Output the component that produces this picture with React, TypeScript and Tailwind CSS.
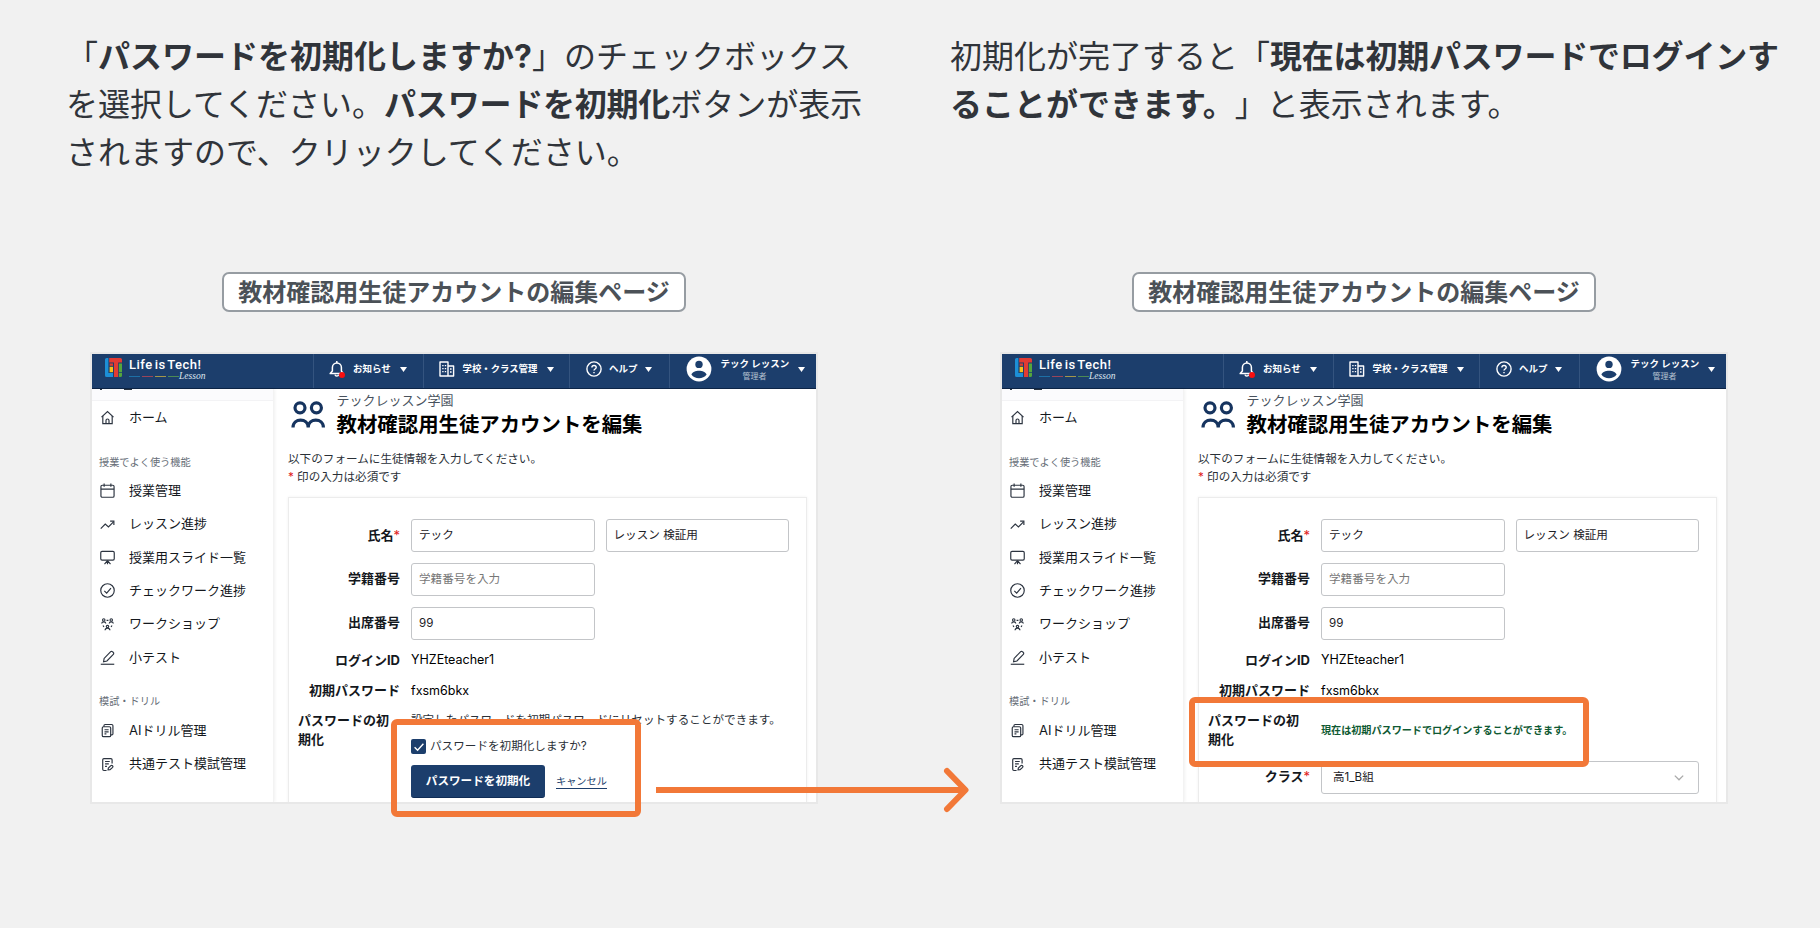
import React from 'react';

interface PageProps {
  done?: boolean;
}

const NAV_MAIN = [
  { label: '授業管理', icon: 'calendar' },
  { label: 'レッスン進捗', icon: 'trend' },
  { label: '授業用スライド一覧', icon: 'board' },
  { label: 'チェックワーク進捗', icon: 'check' },
  { label: 'ワークショップ', icon: 'group' },
  { label: '小テスト', icon: 'pen' },
];

const NAV_DRILL = [
  { label: 'AIドリル管理', icon: 'drill' },
  { label: '共通テスト模試管理', icon: 'exam' },
];

// 16x16 line icons used in the sidebar
const ICONS: Record<string, React.ReactNode> = {
  home: (
    <>
      <path d="M1.6 7.6 8 1.6l6.4 6" />
      <path d="M3 6.4v8.2h10V6.4" />
      <path d="M6.4 14.4v-3.2a1.6 1.6 0 0 1 3.2 0v3.2" />
    </>
  ),
  calendar: (
    <>
      <rect x="1" y="2.4" width="14" height="12.8" rx="1.4" />
      <path d="M1 6.6h14M4.4.6V4M11.6.6V4" />
    </>
  ),
  trend: (
    <>
      <path d="m.8 12.4 4.8-4.8 3.4 3 5.4-5.4" />
      <path d="M10.8 4.4h4v4" />
    </>
  ),
  board: (
    <>
      <rect x=".8" y="1.4" width="14.4" height="9.4" rx="1.4" />
      <path d="M8 10.8v4.4M8 11.4 4.8 15M8 11.4l3.2 3.6" />
    </>
  ),
  check: (
    <>
      <circle cx="8" cy="8" r="7.2" />
      <path d="m4.6 8.4 2.5 2.4 4.6-5.4" />
    </>
  ),
  group: (
    <>
      <circle cx="4" cy="3.2" r="1.3" />
      <circle cx="12" cy="3.2" r="1.3" />
      <circle cx="8" cy="10.2" r="1.3" />
      <path d="M1.8 7c.2-2.4 4.2-2.4 4.4 0M9.8 7c.2-2.4 4.2-2.4 4.4 0M5.4 14.2c.3-3 4.9-3 5.2 0" />
      <path d="M7 3.6h2M3.2 9l1 1.6M12.8 9l-1 1.6" />
    </>
  ),
  pen: (
    <>
      <path d="M.8 15.2h14.4" />
      <path d="m3.8 12.6.6-3.6 7-7.2a1.3 1.3 0 0 1 1.9 0l.9.9a1.3 1.3 0 0 1 0 1.9l-6.8 7.1Z" />
    </>
  ),
  drill: (
    <>
      <rect x="2.4" y="4" width="9" height="10.6" rx="1.4" />
      <path d="M4.2 4V2.9c0-.8.5-1.3 1.3-1.3h6.9c.9 0 1.4.5 1.4 1.3v8.6c0 .7-.5 1.2-1.2 1.2h-1.2" />
      <path d="M4.8 7.2h4.4M4.8 9.4h4.4M4.8 11.6h2" />
    </>
  ),
  exam: (
    <>
      <path d="M7 14.4H4.2c-.8 0-1.3-.5-1.3-1.3V3c0-.8.5-1.3 1.3-1.3h7.4c.8 0 1.3.5 1.3 1.3v4" />
      <path d="M5.4 4.8h5M5.4 7.4h4M5.4 10h2" />
      <path d="m8.6 13.8.3-2 2.7-2.6c1-1 3 .7 1.9 1.9l-2.8 2.5Z" />
    </>
  ),
};

function NavIcon({ name }: { name: string }) {
  return (
    <svg viewBox="0 0 16 16" className="h-[15px] w-[15px] shrink-0 fill-none stroke-[#2c3440] stroke-[1.25]">
      {ICONS[name]}
    </svg>
  );
}

function NavItem({ label, icon }: { label: string; icon: string }) {
  return (
    <div className="flex h-[33.4px] items-center gap-3.5 pl-2 text-[13px] text-[#14181d]">
      <NavIcon name={icon} />
      <span>{label}</span>
    </div>
  );
}

function Caret() {
  return (
    <svg viewBox="0 0 7 5" className="h-[5px] w-[7px] shrink-0 fill-white">
      <path d="M0 0h7L3.5 5Z" />
    </svg>
  );
}

function Logo() {
  return (
    <div className="flex w-[221px] shrink-0 items-start self-start pl-[13px] pt-1">
      <svg viewBox="0 0 17 19" className="h-[19px] w-[17px] shrink-0">
        <path d="M0 1.6Q0 0 1.6 0h1.8v15H8v4H1.6Q0 19 0 17.4Z" fill="#1d8fd6" />
        <path d="M4.2 0h11.2Q17 0 17 1.6v3h-3.8V19H9V4.6H4.2Z" fill="#e23b33" />
        <path d="M4.6 5.4H8v2.4H4.6Z" fill="#e23b33" />
        <path d="M4.6 8.8H8v5.4H4.6Z" fill="#f4bf18" />
        <path d="M13.9 5.4H17v8.8h-3.1ZM13.9 15H17v2.4q0 1.6-1.6 1.6h-1.5Z" fill="#55a63c" />
      </svg>
      <div className="relative ml-[7px] h-[22px]">
        <div className="whitespace-nowrap font-[Roboto,sans-serif] text-[13px] font-medium leading-[14px] tracking-[0.5px] text-white [word-spacing:-1.8px]">
          Life is Tech!
        </div>
        <div className="mt-[3.5px] flex gap-[2px]">
          <i className="h-[1.5px] w-[11px] bg-[#1d6fa6]" />
          <i className="h-[1.5px] w-[11px] bg-[#9a4459]" />
          <i className="h-[1.5px] w-[11px] bg-[#a4964a]" />
          <i className="h-[1.5px] w-[11px] bg-[#4b8a55]" />
        </div>
        <span className="absolute left-[50px] top-[13px] font-['Liberation_Serif',serif] text-[9.5px] font-normal italic leading-[11px] text-[#dfe6ef]">
          Lesson
        </span>
      </div>
    </div>
  );
}

const CELL = 'flex h-full shrink-0 items-center border-l border-[#34547f] pb-1';

function TopBar() {
  return (
    <header className="flex h-[35px] items-center border-b border-[#0d2547] bg-[#1c3e6c] text-[9.5px] font-bold text-white">
      <Logo />
      <div className={`${CELL} w-[110px] pl-[15px]`}>
        <svg viewBox="0 0 16 18" className="h-[18px] w-4 fill-none stroke-white stroke-[1.5]">
          <path d="M1.2 13.6h13L12.4 11V7.4a4.4 4.4 0 0 0-9 0V11Z" strokeLinejoin="round" />
          <path d="M7.8 1v2M6 14.6c.4 2 3.2 2 3.6 0" />
          <circle cx="13" cy="15" r="3" className="fill-[#fa0f0f] stroke-none" />
        </svg>
        <span className="ml-2 w-[47px]">お知らせ</span>
        <Caret />
      </div>
      <div className={`${CELL} w-[146px] pl-[15px]`}>
        <svg viewBox="0 0 16 16" className="h-4 w-4 fill-none stroke-white stroke-[1.4]">
          <path d="M1 15V1h8v14ZM9 5h5.6v10H9" strokeLinejoin="round" />
          <path d="M3.2 4.6h1.4M5.8 4.6h1.4M3.2 7.6h1.4M5.8 7.6h1.4M3.2 10.6h1.4M5.8 10.6h1.4M11 8h1.6M11 11h1.6" />
        </svg>
        <span className="ml-[7.5px] w-[84px] text-[9.4px]">学校・クラス管理</span>
        <Caret />
      </div>
      <div className={`${CELL} w-[100px] pl-[15.5px]`}>
        <svg viewBox="0 0 16 16" className="h-4 w-4 fill-none stroke-white stroke-[1.4]">
          <circle cx="8" cy="8" r="7.1" />
          <path d="M5.9 6.5c0-2.8 4.3-2.7 4.3-.1 0 1.6-2.2 1.6-2.2 3.2M8 11v1.3" />
        </svg>
        <span className="ml-[7.5px] w-9">ヘルプ</span>
        <Caret />
      </div>
      <div className={`${CELL} w-[147px] pl-[15.5px]`}>
        <svg viewBox="0 0 26 26" className="h-[26px] w-[26px]">
          <circle cx="13" cy="13" r="12.4" fill="#fff" />
          <circle cx="13" cy="8.4" r="3.7" fill="#1c3e6c" />
          <path d="M5.4 18.6c1.6-5.2 13.6-5.2 15.2 0-3.4 5-11.8 5-15.2 0Z" fill="#1c3e6c" />
        </svg>
        <div className="ml-[9px] mr-[9px] mt-px w-[68px] whitespace-nowrap text-center leading-[12px]">
          <div>テック レッスン</div>
          <div className="text-[8px] font-normal text-[#b5c1d0]">管理者</div>
        </div>
        <Caret />
      </div>
    </header>
  );
}

function Sidebar() {
  return (
    <nav className="w-[182px] shrink-0 border-r border-[#f3f3f3] shadow-[1px_0_3px_rgba(0,0,0,0.06)]">
      <div className="flex h-3 gap-[22px] border-b border-[#f3f3f5] bg-[#fbfbfd] pl-2">
        <i className="h-px w-[2px] bg-[#2a3440]" />
        <i className="h-px w-2 bg-[#2a3440]" />
      </div>
      <NavItem label="ホーム" icon="home" />
      <div className="mb-[3.6px] mt-[20px] h-4 pl-[7px] text-[10.2px] leading-4 text-[#666d76]">授業でよく使う機能</div>
      {NAV_MAIN.map((item) => (
        <NavItem key={item.label} {...item} />
      ))}
      <div className="mb-[4.6px] mt-[19px] h-4 pl-[7px] text-[10.2px] leading-4 text-[#666d76]">模試・ドリル</div>
      {NAV_DRILL.map((item) => (
        <NavItem key={item.label} {...item} />
      ))}
    </nav>
  );
}

function Label({ children, required }: { children: React.ReactNode; required?: boolean }) {
  return (
    <div className="w-[111px] shrink-0 whitespace-nowrap text-right text-[13px] font-bold text-[#14181d]">
      {children}
      {required && <span className="font-normal text-[#e02020]">*</span>}
    </div>
  );
}

function Field({ children, muted }: { children: React.ReactNode; muted?: boolean }) {
  return (
    <div
      className={`flex h-[33px] w-[183.5px] items-center rounded-[3px] border border-[#c3c5c8] pl-[7px] pt-px ${
        muted ? 'text-[#777]' : 'text-[#1d2126]'
      }`}
    >
      {children}
    </div>
  );
}

function ResetForm() {
  return (
    <div className="ml-3 text-[#2a3037]">
      <div className="whitespace-nowrap leading-[19px]">設定したパスワードを初期パスワードにリセットすることができます。</div>
      <div className="mt-[8px] flex h-[17px] items-center gap-1">
        <span className="flex h-[15px] w-[15px] items-center justify-center rounded-[2px] bg-[#1c3e6c]">
          <svg viewBox="0 0 12 12" className="h-3 w-3 fill-none stroke-white stroke-[1.4]">
            <path d="m1.6 6.2 3 3 5.8-6.4" />
          </svg>
        </span>
        パスワードを初期化しますか?
      </div>
      <div className="mt-[10px] flex items-center">
        <button className="h-[33px] w-[134px] rounded-[3px] border-b border-[#0f2c55] bg-[#1c3e6c] pt-px font-bold text-white">
          パスワードを初期化
        </button>
        <a className="ml-[11px] border-b border-[#1c3e6c] text-[10.2px] leading-[13px] text-[#1c3e6c]">キャンセル</a>
      </div>
    </div>
  );
}

function EditPage({ done }: PageProps) {
  return (
    <div className="ml-[90px] mt-10 h-[452px] w-[728px] overflow-hidden border-2 border-[#e8e8e8] bg-white">
      <TopBar />
      <div className="flex h-[413px]">
        <Sidebar />
        <main className="min-w-0 flex-1 pl-[14px] text-[11.6px]">
          <div className="flex h-[54px] items-start pl-[3px]">
            <svg viewBox="0 0 34 28" className="mt-3 h-7 w-[34px] shrink-0 fill-none stroke-[#16345f] stroke-[3.2]">
              <circle cx="9" cy="6.8" r="5" />
              <circle cx="25.4" cy="6.8" r="5" />
              <path d="M2 26.6c0-10 15.2-10 15.2 0M17.2 26.6c0-10 15.2-10 15.2 0" />
            </svg>
            <div className="ml-[11.6px] mt-[2px] whitespace-nowrap">
              <div className="text-[13px] leading-[18px] text-[#48525d]">テックレッスン学園</div>
              <div className="mt-[2px] text-[20.4px] font-bold leading-[28px] text-black">教材確認用生徒アカウントを編集</div>
            </div>
          </div>
          <div className="mt-[6.5px] leading-[18.5px] text-[#2a3037]">
            <p>以下のフォームに生徒情報を入力してください。</p>
            <p>
              <span className="text-[#e02020]">*</span> 印の入力は必須です
            </p>
          </div>
          <section className="mt-[10.5px] h-[330px] w-[519px] border border-[#ececec] shadow-[0_0_3px_rgba(0,0,0,0.06)]">
            <div className="mt-[21px] flex items-center gap-[11px]">
              <Label required>氏名</Label>
              <Field>テック</Field>
              <Field>レッスン 検証用</Field>
            </div>
            <div className="mt-[10.5px] flex items-center gap-[11px]">
              <Label>学籍番号</Label>
              <Field muted>学籍番号を入力</Field>
            </div>
            <div className="mt-[11px] flex items-center gap-[11px]">
              <Label>出席番号</Label>
              <Field>99</Field>
            </div>
            <div className="mt-[11px] flex h-5 items-center gap-[11px]">
              <Label>ログインID</Label>
              <span className="text-[12.5px]">YHZEteacher1</span>
            </div>
            <div className="mt-[10.5px] flex h-5 items-center gap-[11px]">
              <Label>初期パスワード</Label>
              <span className="text-[12.5px]">fxsm6bkx</span>
            </div>
            <div className="mt-[10px] flex">
              <div className="ml-[9px] w-[101px] shrink-0 text-[13px] font-bold leading-[19px] text-[#14181d]">
                パスワードの初
                <br />
                期化
              </div>
              {done ? (
                <p className="ml-3 mt-[9px] h-5 whitespace-nowrap text-[10.1px] font-bold leading-5 text-[#0f5a33]">
                  現在は初期パスワードでログインすることができます。
                </p>
              ) : (
                <ResetForm />
              )}
            </div>
            {done && (
              <div className="mt-[11.5px] flex items-center gap-[11px]">
                <Label required>クラス</Label>
                <div className="flex h-[33px] w-[378px] items-center justify-between rounded-[3px] border border-[#c3c5c8] pl-[11px] pr-[14px] pt-px text-[#1d2126]">
                  高1_B組
                  <svg viewBox="0 0 10 6" className="h-1.5 w-2.5 fill-none stroke-[#aaa] stroke-[1.3]">
                    <path d="m.8.6 4.2 4.2L9.2.6" />
                  </svg>
                </div>
              </div>
            )}
          </section>
        </main>
      </div>
    </div>
  );
}

function Badge() {
  return (
    <div className="ml-[222px] flex h-10 w-[464px] items-center justify-center whitespace-nowrap rounded-[7px] border-2 border-[#969ca2] bg-white pt-[2px] text-2xl font-bold text-[#4b5157]">
      教材確認用生徒アカウントの編集ページ
    </div>
  );
}

export default function App() {
  return (
    <div className="relative grid h-[928px] w-[1820px] grid-cols-2 overflow-hidden bg-[#f1f1f1] font-[Inter,'Noto_Sans_CJK_JP',sans-serif] [text-spacing-trim:space-all]">
      <div>
        <p className="h-[272px] whitespace-nowrap pl-[66px] pt-[33px] text-[32px] leading-[48px] text-[#30343a]">
          「<b>パスワードを初期化しますか?</b>」のチェックボックス
          <br />
          を選択してください。<b className="tracking-[-0.22px]">パスワードを初期化</b>ボタンが表示
          <br />
          されますので、クリックしてください。
        </p>
        <Badge />
        <EditPage />
      </div>
      <div>
        <p className="h-[272px] whitespace-nowrap pl-10 pt-[33px] text-[32px] leading-[48px] text-[#30343a]">
          初期化が完了すると「<b className="tracking-[-0.2px]">現在は初期パスワードでログインす</b>
          <br />
          <b>ることができます。</b>」と表示されます。
        </p>
        <Badge />
        <EditPage done />
      </div>

      {/* highlight frames and the arrow between the two pages */}
      <div className="absolute left-[391px] top-[719px] h-[98px] w-[250px] rounded-[6px] border-[6px] border-[#f27838]" />
      <div className="absolute left-[1189px] top-[697px] h-[70px] w-[400px] rounded-[6px] border-[6px] border-[#f27838]" />
      <svg viewBox="0 0 316 46" className="absolute left-[656px] top-[767px] h-[46px] w-[316px] fill-none stroke-[#f27838] stroke-[6]">
        <path d="M0 23h308" />
        <path d="m291 4 18.5 19L291 42" strokeLinecap="round" strokeLinejoin="round" />
      </svg>
    </div>
  );
}
